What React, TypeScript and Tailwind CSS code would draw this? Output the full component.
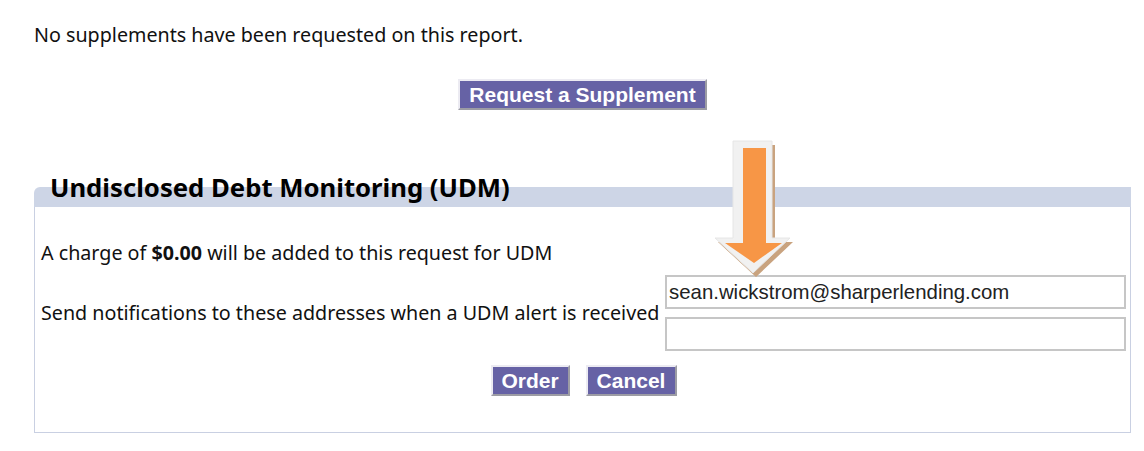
import { useState } from 'react'

const ui = "font-['Noto_Sans',sans-serif]"

function PurpleButton({ label, width }: { label: string; width: string }) {
  return (
    <button
      type="button"
      className={`${width} h-[31px] bg-[#6662a5] text-white font-bold text-[21px] leading-none font-['Liberation_Sans',Arial,sans-serif] border-2 border-t-[#ecebf2] border-l-[#ecebf2] border-b-[#9c9ca4] border-r-[#9c9ca4] flex items-center justify-center`}
    >
      {label}
    </button>
  )
}

function Arrow() {
  const outer = '33,6 72,6 72,103 90,103 53,138 15,103 33,103'
  const inner = '43,13 66,13 66,108 82,108 54,128 25,108 43,108'
  return (
    <svg
      className="absolute left-[700px] top-[135px] pointer-events-none"
      width="110"
      height="150"
      viewBox="0 0 110 150"
    >
      <polygon points={outer} transform="translate(3,4)" fill="#c9a37f" />
      <polygon points={outer} fill="#f1f1f1" stroke="#e6e6e6" strokeWidth="1" />
      <polygon points={inner} fill="#f79646" />
    </svg>
  )
}

export default function App() {
  const [emails, setEmails] = useState(['sean.wickstrom@sharperlending.com', ''])

  return (
    <main className={`relative w-[1144px] h-[451px] bg-white text-[#111] ${ui}`}>
      <div className="ml-[34px] w-[1097px] pt-[22px]">
        <p className="text-[19.7px] leading-[26px]">No supplements have been requested on this report.</p>

        <div className="flex justify-center mt-[31px]">
          <PurpleButton label="Request a Supplement" width="w-[249px]" />
        </div>

        <section className="mt-[77px]">
          <div className="h-[20px] bg-[#cdd5e6] rounded-tl-[6px] pl-[16px]">
            <h2 className="relative -top-[15px] text-[25.7px] leading-[32px] font-bold text-black">
              Undisclosed Debt Monitoring (UDM)
            </h2>
          </div>
          <div className="h-[226px] border border-t-0 border-[#c9d0e2] pl-[6px] pr-[4px] pt-[33px]">
            <p className="text-[19.7px] leading-[26px]">
              A charge of <b>$0.00</b> will be added to this request for UDM
            </p>
            <div className="flex items-center justify-between mt-[9px]">
              <label className="text-[19.7px] leading-[26px]">
                Send notifications to these addresses when a UDM alert is received
              </label>
              <div className="w-[461px] flex flex-col gap-[8px]">
                {emails.map((v, i) => (
                  <input
                    key={i}
                    value={v}
                    onChange={(e) => setEmails(emails.map((x, j) => (j === i ? e.target.value : x)))}
                    className="h-[34px] w-full border-2 border-[#c6c6c6] px-[2px] text-[20.4px] text-[#222] font-['Liberation_Sans',Arial,sans-serif] outline-none"
                  />
                ))}
              </div>
            </div>
            <div className="flex justify-center gap-[16px] mt-[14px]">
              <PurpleButton label="Order" width="w-[79px]" />
              <PurpleButton label="Cancel" width="w-[91px]" />
            </div>
          </div>
        </section>
      </div>
      <Arrow />
    </main>
  )
}
